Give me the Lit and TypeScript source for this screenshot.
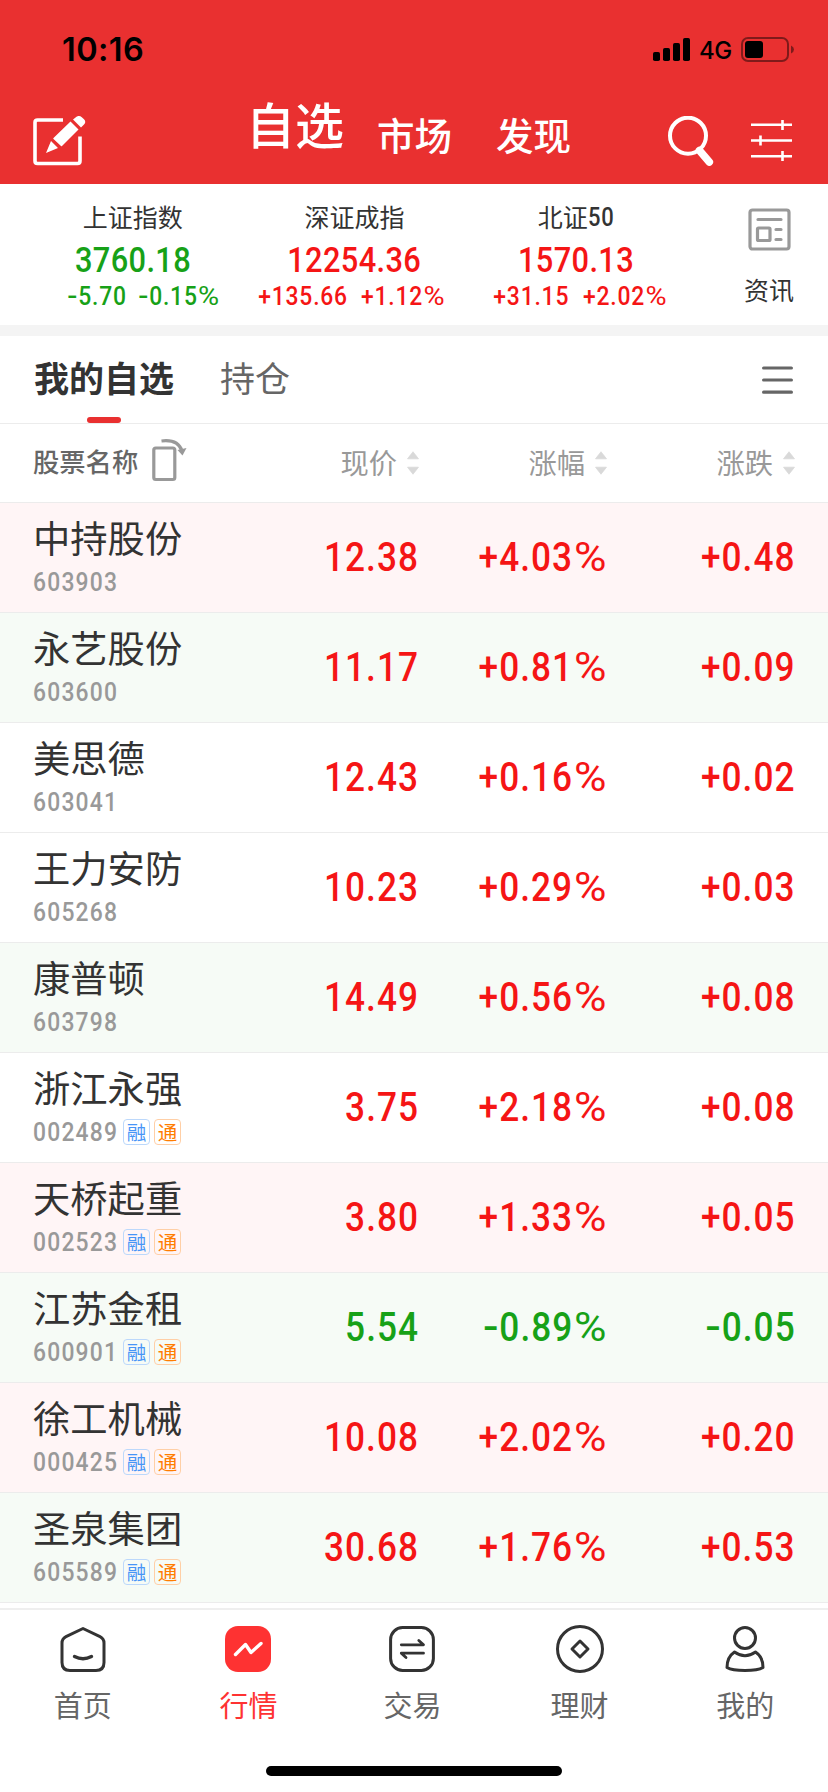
import { LitElement, html, css, svg } from "lit";
import { customElement, property } from "lit/decorators.js";
import { classMap } from "lit/directives/class-map.js";

type Stock = { name: string; code: string; price: string; pct: string; chg: string; bg: string; tags?: boolean };

const INDEXES = [
  { cn: "上证指数", num: "", value: "3760.18", chg: "-5.70", pct: "-0.15%" },
  { cn: "深证成指", num: "", value: "12254.36", chg: "+135.66", pct: "+1.12%" },
  { cn: "北证", num: "50", value: "1570.13", chg: "+31.15", pct: "+2.02%" },
];

const STOCKS: Stock[] = [
  { name: "中持股份", code: "603903", price: "12.38", pct: "+4.03%", chg: "+0.48", bg: "rise" },
  { name: "永艺股份", code: "603600", price: "11.17", pct: "+0.81%", chg: "+0.09", bg: "fall" },
  { name: "美思德", code: "603041", price: "12.43", pct: "+0.16%", chg: "+0.02", bg: "" },
  { name: "王力安防", code: "605268", price: "10.23", pct: "+0.29%", chg: "+0.03", bg: "" },
  { name: "康普顿", code: "603798", price: "14.49", pct: "+0.56%", chg: "+0.08", bg: "fall" },
  { name: "浙江永强", code: "002489", price: "3.75", pct: "+2.18%", chg: "+0.08", bg: "", tags: true },
  { name: "天桥起重", code: "002523", price: "3.80", pct: "+1.33%", chg: "+0.05", bg: "rise", tags: true },
  { name: "江苏金租", code: "600901", price: "5.54", pct: "-0.89%", chg: "-0.05", bg: "fall", tags: true },
  { name: "徐工机械", code: "000425", price: "10.08", pct: "+2.02%", chg: "+0.20", bg: "rise", tags: true },
  { name: "圣泉集团", code: "605589", price: "30.68", pct: "+1.76%", chg: "+0.53", bg: "fall", tags: true },
];

const TABS = [
  {
    label: "首页",
    icon: svg`<path d="M25 4.500 42 12.600q4 2 4 6.400V38.500q0 8-8 8H12q-8 0-8-8V19q0-4.400 4-6.400Z"/><path d="M16.500 32.500q8.500 4.500 17 0" stroke-width="3.400"/>`,
  },
  {
    label: "行情",
    icon: svg`<rect class="solid" x="2" y="2" width="46" height="46" rx="13"/><path class="spark" d="M12.500 30.500 22.500 20.500 28 28.500 38 19.500"/>`,
  },
  {
    label: "交易",
    icon: svg`<rect x="3.600" y="3.600" width="42.800" height="42.800" rx="12"/><path d="M14.300 20.800H36.500L31.800 16.500M36.500 29.200H14.300L19 33.600" stroke-width="2.800"/>`,
  },
  { label: "理财", icon: svg`<circle cx="25" cy="25" r="22.500"/><path d="M25 17 33 25 25 33 17 25Z"/>` },
  {
    label: "我的",
    icon: svg`<circle cx="25" cy="14" r="10.500"/><path d="M14.500 28Q7 33 7 43.500Q12 46.500 25 46.500T43 43.500Q43 33 35.500 28Q25 35.500 14.500 28Z"/>`,
  },
];

@customElement("status-bar")
class StatusBar extends LitElement {
  static styles = css`
    :host { display: flex; justify-content: space-between; height: 98px; padding: 0 34px 0 62px; color: #000; font-family: Inter, sans-serif; }
    .time { font-size: 32.500px; font-weight: 600; line-height: 40px; margin-top: 30px; letter-spacing: 0.4px; }
    .right { display: flex; height: 26px; margin-top: 37px; align-items: center; }
    .net { font-size: 24px; font-weight: 500; line-height: 26px; margin: 2px 10px 0 8px; width: 32px; letter-spacing: -0.5px; }
    svg { display: block; }
  `;
  render() {
    return html`
      <div class="time">10:16</div>
      <div class="right">
        <svg width="38" height="26" viewBox="0 0 38 26">
          <rect x="0" y="15" width="7" height="9" rx="1.800" /><rect x="10" y="11" width="7" height="13" rx="1.800" />
          <rect x="20" y="6" width="7" height="18" rx="1.800" /><rect x="30" y="1" width="7" height="23" rx="1.800" />
        </svg>
        <div class="net">4G</div>
        <svg width="53" height="26" viewBox="0 0 53 26">
          <g opacity="0.45"><rect x="1" y="1" width="46" height="23" rx="6" fill="none" stroke="#000" stroke-width="2" /><path d="M50 8.500q3 1.500 3 4t-3 4Z" /></g>
          <rect x="4" y="4" width="18" height="17" rx="3" />
        </svg>
      </div>
    `;
  }
}

@customElement("sort-arrows")
class SortArrows extends LitElement {
  static styles = css`
    :host { display: block; height: 24px; }
    svg { display: block; }
  `;
  render() {
    return html`<svg width="12" height="24" viewBox="0 0 12 24" fill="#d9d9d9" stroke="#d9d9d9" stroke-width="0.800" stroke-linejoin="round">
      <path d="M6 .8 11.500 7.800H.5ZM6 23.200 11.500 16.200H.5Z" />
    </svg>`;
  }
}

/* Condensed tabular figure; the side it is anchored to stays fixed. */
@customElement("din-num")
class DinNum extends LitElement {
  @property() v = "";
  @property({ reflect: true }) side = "right";
  static styles = css`
    :host { display: inline-block; font-family: Roboto, sans-serif; font-weight: 500; white-space: nowrap; letter-spacing: 0.030em; transform: scaleX(0.88); transform-origin: right; }
    :host([side="left"]) { transform-origin: left; }
    :host([side="center"]) { transform-origin: center; }
    .minus { display: inline-block; transform: scaleX(1.3); padding: 0 0.040em 0 0.030em; }
    .pc { display: inline-block; transform: scaleX(1.260); transform-origin: right; margin: 0 0.020em 0 0.215em; font-weight: 400; letter-spacing: 0; }
  `;
  render() {
    const neg = this.v.startsWith("-");
    const pc = this.v.endsWith("%");
    const body = this.v.slice(neg ? 1 : 0, pc ? -1 : undefined);
    return html`${neg ? html`<span class="minus">-</span>` : null}${body}${pc ? html`<span class="pc">%</span>` : null}`;
  }
}

@customElement("app-root")
class AppRoot extends LitElement {
  static styles = css`
    :host {
      display: flex; flex-direction: column; width: 828px; height: 1792px; overflow: hidden; background: #fff; color: #333;
      font-family: "Noto Sans CJK SC", sans-serif;
    }
    * { box-sizing: border-box; }
    svg { display: block; flex: none; }
    .top { height: 184px; background: #e93030; flex: none; }
    .nav { display: grid; grid-template-columns: 246px 1fr 161px; height: 86px; color: #fff; }
    .edit { margin: 18px 0 0 33px; }
    .titles { display: flex; align-items: flex-start; font-size: 37.500px; line-height: 50px; font-weight: 500; white-space: nowrap; }
    .titles .on { font-size: 49px; line-height: 60px; margin: -5px 33px 0 0; }
    .titles .t { margin: 11px 44px 0 0; }
    .tools { display: flex; gap: 37px; padding: 18px 0 0 1px; }

    .strip { display: grid; grid-template-columns: 665px 1fr; height: 141px; padding-left: 22px; flex: none; }
    .quotes { display: grid; grid-template-columns: repeat(3, 1fr); }
    .quote { display: flex; flex-direction: column; align-items: center; padding-top: 14px; }
    .qname { font-size: 25px; line-height: 36px; height: 36px; white-space: nowrap; display: flex; }
    .qname din-num { line-height: 40px; margin-right: -3px; }
    .qvalue { font-family: Roboto, sans-serif; font-size: 35px; line-height: 42px; margin-top: 6px; height: 41px; }
    .qvalue din-num { letter-spacing: 0.012em; }
    .qchg { display: grid; grid-template-columns: 1fr 1fr; column-gap: 13px; width: 100%; font-size: 26px; line-height: 30px; white-space: nowrap; }
    .qchg din-num { justify-self: end; letter-spacing: 0.035em; }
    .qchg din-num[side="left"] { justify-self: start; }
    .up { color: #f51515; }
    .down { color: #17a117; }
    .news { display: flex; flex-direction: column; align-items: center; padding: 24px 0 0 23px; font-size: 25px; line-height: 36px; gap: 20px; }
    .band { height: 11px; background: #f4f4f4; flex: none; }

    .subtabs { display: flex; justify-content: space-between; height: 88px; border-bottom: 1px solid #ececec; padding: 0 35px 0 34px; flex: none; }
    .left { display: flex; gap: 46px; font-size: 35px; line-height: 50px; }
    .sub { display: flex; flex-direction: column; align-items: center; padding-top: 16px; color: #666; }
    .sub.on { color: #333; font-weight: 700; }
    .bar { width: 34px; height: 6px; border-radius: 3px; background: #e93030; margin-top: 15px; }
    .menu { margin-top: 30px; }

    .row { display: grid; grid-template-columns: 231px 188px 188px 188px; padding-right: 33px; height: 110px; border-bottom: 1px solid #ececec; flex: none; }
    .head { height: 79px; align-items: center; }
    .head .c0 { display: flex; align-items: center; padding-left: 33px; font-size: 26.300px; line-height: 44px; font-weight: 500; color: #666; gap: 14px; white-space: nowrap; margin-top: -4px; }
    .head .c0 svg { margin-top: -2px; }
    .head .c { display: flex; align-items: center; justify-content: flex-end; gap: 10px; font-size: 28.300px; line-height: 40px; color: #999; white-space: nowrap; margin-top: -3px; }
    .head sort-arrows { margin-top: 2px; }
    .rise { background: #fff5f6; }
    .fall { background: #f6fbf6; }
    .id { padding: 10px 0 0 33px; white-space: nowrap; }
    .name { font-size: 37.300px; line-height: 48px; }
    .meta { display: flex; align-items: center; height: 30px; margin-top: 6px; }
    .code { font-family: Roboto, sans-serif; font-size: 26px; line-height: 30px; color: #999; width: 90px; display: block; }
    .code din-num { letter-spacing: 0.052em; }
    .tag { width: 27px; height: 26px; border-radius: 4px; border: 1px solid #bcd8fb; color: #4795f7; font-size: 19.500px; line-height: 24px; text-align: center; margin-right: 4px; }
    .tag.o { color: #ff7d00; border-color: #ffcfa6; }
    .num { font-family: Roboto, sans-serif; font-size: 40px; line-height: 48px; text-align: right; padding-top: 31px; }
    .num:last-child { margin-right: -1px; }

    .dock { display: grid; grid-template-columns: repeat(5, 1fr); height: 158px; border-top: 2px solid #efefef; margin-top: 5px; flex: none; }
    .tab { display: flex; flex-direction: column; align-items: center; gap: 9px; padding-top: 14px; font-size: 29px; line-height: 42px; color: #666; }
    .tab.mid { padding-right: 3px; }
    .tab svg { fill: none; stroke: #333; stroke-width: 3; stroke-linecap: round; stroke-linejoin: round; }
    .tab.on { color: #fe3232; }
    .tab .solid { fill: #fe3232; stroke: none; }
    .tab .spark { stroke: #fff; stroke-width: 3.400; }
    .home { width: 296px; height: 10px; border-radius: 5px; background: #000; margin: 0 auto; flex: none; }
  `;

  tone(v: string) {
    return v.startsWith("-") ? "down" : "up";
  }

  row(s: Stock) {
    const t = this.tone(s.pct);
    return html`<div class="row ${s.bg}">
      <div class="id">
        <div class="name">${s.name}</div>
        <div class="meta">
          <span class="code"><din-num side="left" .v=${s.code}></din-num></span>
          ${s.tags ? html`<span class="tag">融</span><span class="tag o">通</span>` : null}
        </div>
      </div>
      <div class="num ${t}"><din-num .v=${s.price}></din-num></div>
      <div class="num ${t}"><din-num .v=${s.pct}></din-num></div>
      <div class="num ${t}"><din-num .v=${s.chg}></din-num></div>
    </div>`;
  }

  render() {
    return html`
      <div class="top">
        <status-bar></status-bar>
        <div class="nav">
          <svg class="edit" width="54" height="52" viewBox="0 0 54 52">
            <path d="M30 4H4.500Q2 4 2 6.500V45Q2 47.500 4.500 47.500H44.500Q47 47.500 47 45V20.500" fill="none" stroke="#fff" stroke-width="3.600" />
            <path fill="#fff" d="M37.500 5.500 45.500 13.500 29 30Q28.500 30.500 28 30L20.500 23Q20 22.500 20.500 22ZM18 25 25 32 13 37ZM40 3.500 43.500.8Q46-1 48.800 1.200L51 3.300Q53.500 6 51 8.500L48 11.500Z" />
          </svg>
          <div class="titles"><span class="on">自选</span><span class="t">市场</span><span class="t">发现</span></div>
          <div class="tools">
            <svg width="46" height="50" viewBox="0 0 46 50" fill="none" stroke="#fff" stroke-linecap="round">
              <circle cx="20" cy="19.700" r="18" stroke-width="4" />
              <path d="M31.500 34.500 41.300 46" stroke-width="7.600" />
            </svg>
            <svg width="42" height="50" viewBox="0 0 42 50" stroke="#fff" stroke-width="2.600">
              <path d="M0 8.800H41M0 24.500H41M0 40.200H41M31.500 4V14M9.500 19.500V29.500M31.500 35V45" />
            </svg>
          </div>
        </div>
      </div>
      <div class="strip">
        <div class="quotes">
          ${INDEXES.map(
            (q) => html`<div class="quote">
              <div class="qname">${q.cn}${q.num ? html`<din-num side="left" .v=${q.num}></din-num>` : null}</div>
              <div class="qvalue ${this.tone(q.chg)}"><din-num side="center" .v=${q.value}></din-num></div>
              <div class="qchg ${this.tone(q.chg)}"><din-num .v=${q.chg}></din-num><din-num side="left" .v=${q.pct}></din-num></div>
            </div>`
          )}
        </div>
        <div class="news">
          <svg width="43" height="43" viewBox="0 0 43 43" fill="none" stroke="#999" stroke-width="3.200" stroke-linecap="round">
            <rect x="2" y="2" width="39" height="39" rx="2.500" />
            <path d="M10 11.500H33M28 21.500H33M28 31.500H33" />
            <rect x="9.500" y="20" width="12.500" height="12.500" rx="1" />
          </svg>
          资讯
        </div>
      </div>
      <div class="band"></div>
      <div class="subtabs">
        <div class="left">
          <div class="sub on">我的自选<i class="bar"></i></div>
          <div class="sub">持仓</div>
        </div>
        <svg class="menu" width="31" height="29" viewBox="0 0 31 29" stroke="#666" stroke-width="3.200" stroke-linecap="round">
          <path d="M1.600 2H29.400M1.600 14H29.400M1.600 26.200H29.400" />
        </svg>
      </div>
      <div class="row head">
        <div class="c0">
          股票名称
          <svg width="36" height="44" viewBox="0 0 36 44" fill="none" stroke="#999" stroke-width="3.200">
            <rect x="1.800" y="10" width="21" height="31.500" rx="2" />
            <path d="M9.500 3Q26 1 30 13" />
            <path d="M25.500 12 34.500 10 30.500 17.500Z" fill="#999" stroke="none" />
          </svg>
        </div>
        ${["现价", "涨幅", "涨跌"].map((t) => html`<div class="c">${t}<sort-arrows></sort-arrows></div>`)}
      </div>
      ${STOCKS.map((s) => this.row(s))}
      <div class="dock">
        ${TABS.map(
          (t) => html`<div class=${classMap({ tab: true, on: t.label === "行情", mid: t.label === "交易" })}>
            <svg width="50" height="50" viewBox="0 0 50 50">${t.icon}</svg>${t.label}
          </div>`
        )}
      </div>
      <div class="home"></div>
    `;
  }
}
